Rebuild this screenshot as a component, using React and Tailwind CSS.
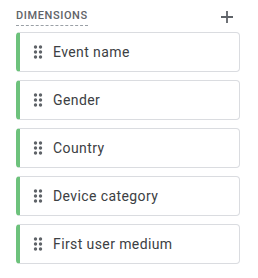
const dimensions = ['Event name', 'Gender', 'Country', 'Device category', 'First user medium'];

function DragHandle() {
  return (
    <svg width="10" height="14" viewBox="0 0 10 14" className="shrink-0">
      {[2, 7, 12].map((y) =>
        [2.5, 7.5].map((x) => <circle key={`${x}-${y}`} cx={x} cy={y} r="1.7" fill="#5f6368" />)
      )}
    </svg>
  );
}

function App() {
  return (
    <div className="w-[258px] h-[278px] bg-white font-['Roboto',sans-serif]">
      <div className="pl-4 pr-[18px] pt-[9px]">
        <div className="flex items-start justify-between h-[23px]">
          <span className="text-[11px] leading-[13px] font-medium tracking-[0.6px] text-[#5f6368] border-b border-dashed border-[#9aa0a6] pb-[3px]">
            DIMENSIONS
          </span>
          <svg width="14" height="14" viewBox="0 0 14 14" className="mt-[1px] mr-[6px]">
            <path d="M7 1v12M1 7h12" stroke="#5f6368" strokeWidth="1.8" />
          </svg>
        </div>
        <div className="flex flex-col gap-2 w-[224px]">
          {dimensions.map((d) => (
            <div
              key={d}
              className="h-10 flex items-center gap-[10px] pl-[13px] rounded border border-[#dadce0] border-l-4 border-l-[#6dc27c] bg-white"
            >
              <DragHandle />
              <span className="text-[14px] tracking-[0.4px] text-[#3c4043]">{d}</span>
            </div>
          ))}
        </div>
      </div>
    </div>
  );
}

export default App;
